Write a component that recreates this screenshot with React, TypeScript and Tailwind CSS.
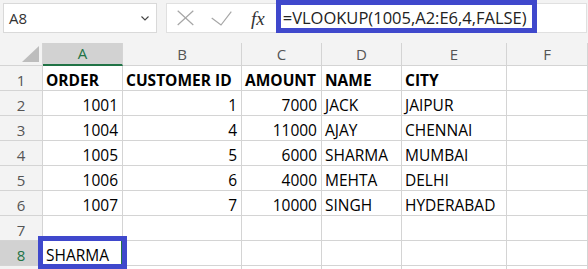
import React from "react";

const COLS = ["A", "B", "C", "D", "E", "F"];
const WIDTHS = ["w-[80px]", "w-[119px]", "w-[80px]", "w-[80px]", "w-[105px]", "w-[81px]"];

type Cell = { v: string; r?: boolean };
const ROWS: Cell[][] = [
  [{ v: "ORDER" }, { v: "CUSTOMER ID" }, { v: "AMOUNT" }, { v: "NAME" }, { v: "CITY" }, { v: "" }],
  [{ v: "1001", r: true }, { v: "1", r: true }, { v: "7000", r: true }, { v: "JACK" }, { v: "JAIPUR" }, { v: "" }],
  [{ v: "1004", r: true }, { v: "4", r: true }, { v: "11000", r: true }, { v: "AJAY" }, { v: "CHENNAI" }, { v: "" }],
  [{ v: "1005", r: true }, { v: "5", r: true }, { v: "6000", r: true }, { v: "SHARMA" }, { v: "MUMBAI" }, { v: "" }],
  [{ v: "1006", r: true }, { v: "6", r: true }, { v: "4000", r: true }, { v: "MEHTA" }, { v: "DELHI" }, { v: "" }],
  [{ v: "1007", r: true }, { v: "7", r: true }, { v: "10000", r: true }, { v: "SINGH" }, { v: "HYDERABAD" }, { v: "" }],
  [{ v: "" }, { v: "" }, { v: "" }, { v: "" }, { v: "" }, { v: "" }],
  [{ v: "SHARMA" }, { v: "" }, { v: "" }, { v: "" }, { v: "" }, { v: "" }],
  [{ v: "" }, { v: "" }, { v: "" }, { v: "" }, { v: "" }, { v: "" }],
];

export default function App() {
  return (
    <div
      className="relative w-[588px] h-[269px] overflow-hidden bg-white"
      style={{ fontFamily: '"Open Sans", "Noto Sans", sans-serif' }}
    >
      {/* Formula bar */}
      <div className="h-[43px] bg-[#f3f3f3] flex items-start pt-[3px]">
        <div className="ml-[3px] w-[154px] h-[30px] bg-white border border-[#d9d9d9] flex items-center justify-between pl-[5px] pr-[7px]">
          <span className="text-[15px] text-[#333]">A8</span>
          <svg width="8" height="5" viewBox="0 0 8 5">
            <path d="M0.5 0.5 L4 4 L7.5 0.5" fill="none" stroke="#444" strokeWidth="1.1" />
          </svg>
        </div>
        <div className="ml-[9px] w-[421px] h-[30px] bg-white border border-[#e0e0e0] flex items-center">
          <svg className="ml-[10px]" width="17" height="16" viewBox="0 0 17 16">
            <path d="M0.7 0.7 L16.3 15 M16.3 0.7 L0.7 15" fill="none" stroke="#a6a6a6" strokeWidth="1.2" />
          </svg>
          <svg className="ml-[17px]" width="21" height="15" viewBox="0 0 21 15">
            <path d="M0.7 7 L10 14 L20.3 0.7" fill="none" stroke="#a6a6a6" strokeWidth="1.2" />
          </svg>
          <span
            className="ml-[19px] text-[19px] italic text-[#333] leading-none"
            style={{ fontFamily: '"Liberation Serif", serif' }}
          >
            fx
          </span>
          <span className="ml-[18px] text-[16.5px] text-[#222] whitespace-nowrap">
            =VLOOKUP(1005,A2:E6,4,FALSE)
          </span>
        </div>
      </div>

      {/* Grid */}
      <div className="flex flex-col">
        {/* Column headers */}
        <div className="flex h-[23px] bg-[#f3f3f3]">
          <div className="w-[43px] h-full border-r border-b border-[#d4d4d4] relative">
            <svg className="absolute left-[22px] top-[3px]" width="17" height="16" viewBox="0 0 17 16">
              <path d="M17 0 L17 16 L0 16 Z" fill="#bdbdbd" />
            </svg>
          </div>
          {COLS.map((c, i) => (
            <div
              key={c}
              className={`${WIDTHS[i]} h-full border-r flex items-center justify-center text-[15px] ${
                i === 0
                  ? "bg-[#d2d2d2] border-b-2 border-b-[#217346] border-r-[#d4d4d4] text-[#217346]"
                  : "border-b border-[#d4d4d4] text-[#555]"
              }`}
            >
              {c}
            </div>
          ))}
        </div>
        {ROWS.map((row, ri) => (
          <div key={ri} className="flex h-[25px] shrink-0">
            <div
              className={`w-[43px] h-full border-r border-b border-[#d4d4d4] flex justify-center pt-[4px] leading-[20px] text-[15px] ${
                ri === 7 ? "bg-[#d2d2d2] text-[#217346]" : "bg-[#f3f3f3] text-[#555]"
              }`}
            >
              {ri < 8 ? ri + 1 : ""}
            </div>
            {row.map((cell, ci) => (
              <div
                key={ci}
                className={`${WIDTHS[ci]} h-full border-r border-b border-[#d4d4d4] flex pt-[4px] leading-[20px] text-[15.5px] text-black whitespace-nowrap ${
                  cell.r ? "justify-end pr-[4px]" : "justify-start pl-[3px]"
                } ${ri === 0 ? "font-bold" : ""} ${ri === 7 && ci === 0 ? "border-r-2 border-r-[#217346]" : ""}`}
              >
                {cell.v}
              </div>
            ))}
          </div>
        ))}
      </div>

      {/* Annotation boxes */}
      <div className="absolute left-[276px] top-0 w-[261px] h-[33px] border-[5px] border-[#3f48cc]" />
      <div className="absolute left-[38px] top-[236px] w-[89px] h-[33px] border-[5px] border-[#3f48cc]" />
    </div>
  );
}
